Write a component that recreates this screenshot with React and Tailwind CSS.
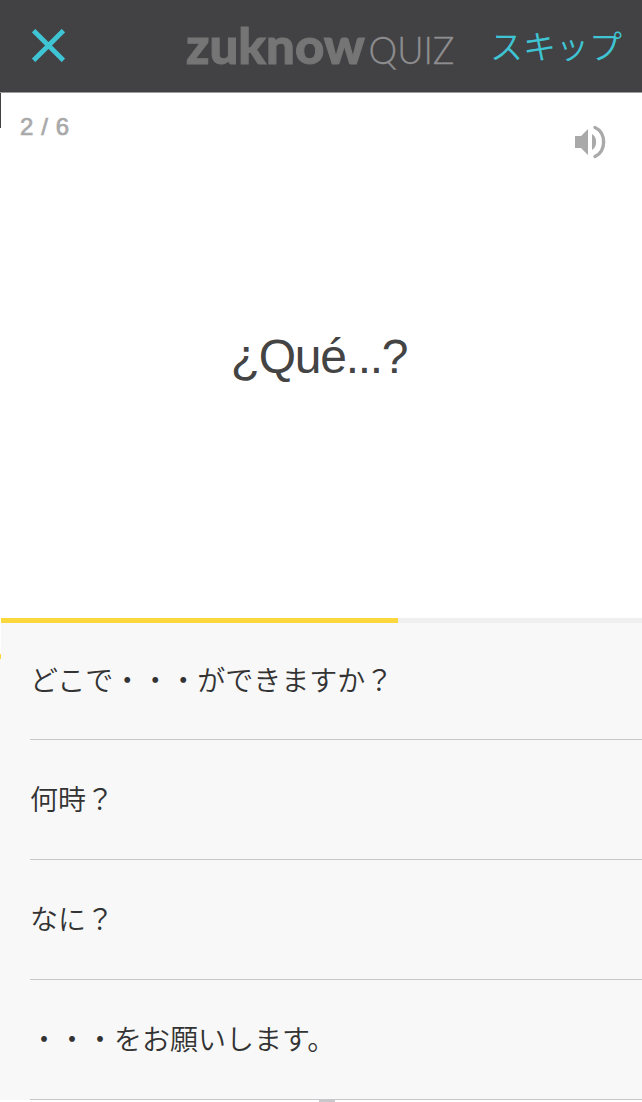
const answers = [
    'どこで・・・ができますか？',
    '何時？',
    'なに？',
    '・・・をお願いします。',
]

function Logo() {
    return (
        <svg width="276" height="70" viewBox="182 12 276 70" className="shrink-0 overflow-visible">
            <text x="186" y="63.5" textLength="179" lengthAdjust="spacingAndGlyphs" className="fill-[#757575] stroke-[#757575] stroke-1 font-['Lato',sans-serif] text-[49px] font-black">
                zuknow
            </text>
            <text x="368.5" y="64" textLength="86" lengthAdjust="spacingAndGlyphs" className="fill-[#8e8e90] stroke-[#8e8e90] [stroke-width:0.3px] font-['Lato',sans-serif] text-[37px] font-light">
                QUIZ
            </text>
        </svg>
    )
}

function Header() {
    return (
        <header className="flex h-[93px] shrink-0 items-start border-b border-[#9c9c9d] bg-[#424143]">
            <button className="ml-8 mt-[29px] shrink-0" aria-label="閉じる">
                <svg width="33" height="33" viewBox="0 0 33 33" fill="none" stroke="#3fc4d4" strokeWidth="4.8">
                    <path d="M1.6 1.6 31.4 31.4M31.4 1.6 1.6 31.4" />
                </svg>
            </button>
            <div className="ml-[117px] mt-3 shrink-0">
                <Logo />
            </div>
            <button className="ml-8 mt-[25px] shrink-0 whitespace-nowrap font-['Noto_Sans_CJK_JP_DemiLight','Noto_Sans_CJK_JP',sans-serif] text-[33px] leading-10 font-[350] text-[#3fc4d4]">
                スキップ
            </button>
        </header>
    )
}

function Question() {
    return (
        <section className="flex h-[525px] shrink-0 flex-col bg-white">
            <div className="flex justify-between">
                <span className="ml-5 mt-5 font-['Liberation_Sans',sans-serif] text-[24px] leading-7 tracking-[0.6px] text-[#a9a9a9] [-webkit-text-stroke:0.7px_#a9a9a9]">
                    2 / 6
                </span>
                <svg width="32" height="34" viewBox="0 0 32 34" className="mr-[35px] mt-8" fill="#a9a9a9">
                    <path d="M0 11h6l7-7v26l-7-7H0z" />
                    <path d="M17 9c5.5 3 5.5 13 0 16z" />
                    <path d="M20 2.5c11.5 5 11.5 24 0 29" fill="none" stroke="#a9a9a9" strokeWidth="3.4" strokeLinecap="round" />
                </svg>
            </div>
            <h1 className="mt-[170px] pr-1 text-center font-['Liberation_Sans',sans-serif] text-[48px] leading-[56px] tracking-[-1.3px] text-[#444]">
                ¿Qué...?
            </h1>
        </section>
    )
}

function App() {
    return (
        <div className="relative flex h-[1102px] w-full flex-col overflow-hidden bg-[#f8f8f8] font-['Noto_Sans_CJK_JP',sans-serif]">
            <Header />
            <Question />
            <div className="h-[5px] shrink-0 bg-[#efefef]">
                <div className="ml-px h-full w-[397px] bg-[#fad73c]" />
            </div>
            <ul>
                {answers.map((answer) => (
                    <li key={answer} className="ml-[30px] flex h-[120px] items-center border-b border-[#c8c7cc] pb-[3px] font-['Noto_Sans_CJK_JP_DemiLight','Noto_Sans_CJK_JP',sans-serif] text-[28px] leading-10 font-[350] text-[#333] first:h-[117px] first:pb-[5px]">
                        {answer}
                    </li>
                ))}
            </ul>
            <div className="flex h-0.5 justify-center bg-white">
                <div className="mr-[-12px] w-4 bg-[#c8c7cc]" />
            </div>

            {/* edge of the screen behind */}
            <div className="absolute left-0 top-[93px] flex h-[566px] w-px flex-col bg-white">
                <div className="h-[35px] bg-[#424143]" />
                <div className="mt-auto h-[5px] bg-[#fad73c]" />
            </div>
        </div>
    )
}

export default App
